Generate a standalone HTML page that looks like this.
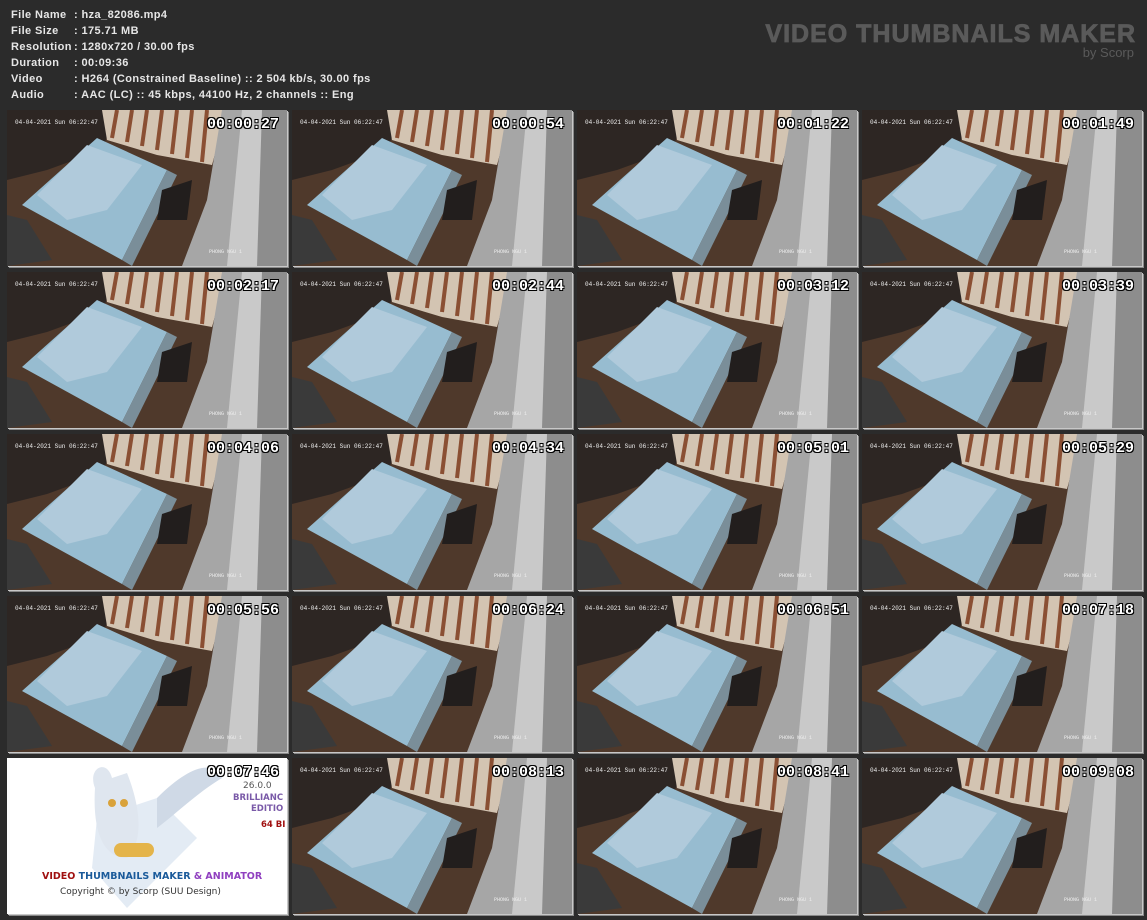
<!DOCTYPE html>
<html><head><meta charset="utf-8"><style>
body{margin:0;width:1147px;height:920px;background:#2b2b2b;overflow:hidden;position:relative;font-family:"Liberation Sans",sans-serif}
.info{position:absolute;left:11px;top:7px;color:#e6e6e6;font-size:11px;font-weight:bold;line-height:16px;letter-spacing:0.4px;white-space:nowrap}
.info div span{display:inline-block;width:63px}
.brand{position:absolute;right:11px;top:21px;color:#5a5a5a;font-family:"Liberation Sans",sans-serif;font-weight:900;font-size:25px;letter-spacing:1px;text-align:right;line-height:26px;-webkit-text-stroke:0.8px #5a5a5a}
.brand small{display:block;font-weight:normal;font-size:13px;line-height:12px;margin-right:2px;letter-spacing:0;-webkit-text-stroke:0}
.t{position:absolute;width:280px;height:156px;box-shadow:1px 1px 0 #c8c8c8,2px 2px 0 #888;overflow:hidden}
.t svg{position:absolute;left:0;top:0}
.ts{position:absolute;right:8px;top:6px;color:#fff;font-family:"Liberation Mono",monospace;font-weight:bold;font-size:15px;text-shadow:1px 1px 0 #000,-1px -1px 0 #000,1px -1px 0 #000,-1px 1px 0 #000}
.logo{background:#fff}
</style></head><body>
<svg width="0" height="0" style="position:absolute"><defs>
<g id="sc">
<rect width="280" height="156" fill="#4f392b"/>
<polygon points="0,0 110,0 95,40 40,60 0,70" fill="#2d2623"/>
<polygon points="95,0 220,0 205,55 150,45 100,30" fill="#d3c4b2"/>
<g stroke="#8a4f33" stroke-width="4"><line x1="110" y1="0" x2="105" y2="28"/><line x1="125" y1="0" x2="120" y2="32"/><line x1="140" y1="0" x2="135" y2="36"/><line x1="155" y1="0" x2="150" y2="40"/><line x1="170" y1="0" x2="165" y2="44"/><line x1="185" y1="0" x2="180" y2="48"/><line x1="200" y1="0" x2="195" y2="52"/></g>
<polygon points="15,95 90,28 160,60 115,150" fill="#97bcd0"/>
<polygon points="30,85 80,35 135,55 100,100 60,110" fill="#b0cadb"/>
<polygon points="115,150 160,60 170,65 125,156" fill="#7a8e99"/>
<polygon points="155,80 185,70 180,110 150,110" fill="#221e1d"/>
<polygon points="215,0 280,0 280,156 175,156 200,90" fill="#a6a6a6"/>
<polygon points="235,0 280,0 280,156 220,156" fill="#c9c9c9"/>
<polygon points="255,0 280,0 280,156 250,156" fill="#8d8d8d"/>
<polygon points="0,105 20,110 45,150 0,156" fill="#3a3a3a"/>
<text x="8" y="14" font-size="6" fill="#eee" font-family="Liberation Mono,monospace">04-04-2021 Sun 06:22:47</text>
<text x="202" y="143" font-size="5" fill="#eee" font-family="Liberation Mono,monospace">PHONG NGU 1</text>
</g></defs></svg>
<div class="info">
<div><span>File Name</span>: hza_82086.mp4</div>
<div><span>File Size</span>: 175.71 MB</div>
<div><span>Resolution</span>: 1280x720 / 30.00 fps</div>
<div><span>Duration</span>: 00:09:36</div>
<div><span>Video</span>: H264 (Constrained Baseline) :: 2 504 kb/s, 30.00 fps</div>
<div><span>Audio</span>: AAC (LC) :: 45 kbps, 44100 Hz, 2 channels :: Eng</div>
</div>
<div class="brand">VIDEO THUMBNAILS MAKER<small>by Scorp</small></div>

<div class="t" style="left:7px;top:110px"><svg width="280" height="156"><use href="#sc"/></svg><div class="ts">00:00:27</div></div>
<div class="t" style="left:292px;top:110px"><svg width="280" height="156"><use href="#sc"/></svg><div class="ts">00:00:54</div></div>
<div class="t" style="left:577px;top:110px"><svg width="280" height="156"><use href="#sc"/></svg><div class="ts">00:01:22</div></div>
<div class="t" style="left:862px;top:110px"><svg width="280" height="156"><use href="#sc"/></svg><div class="ts">00:01:49</div></div>

<div class="t" style="left:7px;top:272px"><svg width="280" height="156"><use href="#sc"/></svg><div class="ts">00:02:17</div></div>
<div class="t" style="left:292px;top:272px"><svg width="280" height="156"><use href="#sc"/></svg><div class="ts">00:02:44</div></div>
<div class="t" style="left:577px;top:272px"><svg width="280" height="156"><use href="#sc"/></svg><div class="ts">00:03:12</div></div>
<div class="t" style="left:862px;top:272px"><svg width="280" height="156"><use href="#sc"/></svg><div class="ts">00:03:39</div></div>

<div class="t" style="left:7px;top:434px"><svg width="280" height="156"><use href="#sc"/></svg><div class="ts">00:04:06</div></div>
<div class="t" style="left:292px;top:434px"><svg width="280" height="156"><use href="#sc"/></svg><div class="ts">00:04:34</div></div>
<div class="t" style="left:577px;top:434px"><svg width="280" height="156"><use href="#sc"/></svg><div class="ts">00:05:01</div></div>
<div class="t" style="left:862px;top:434px"><svg width="280" height="156"><use href="#sc"/></svg><div class="ts">00:05:29</div></div>

<div class="t" style="left:7px;top:596px"><svg width="280" height="156"><use href="#sc"/></svg><div class="ts">00:05:56</div></div>
<div class="t" style="left:292px;top:596px"><svg width="280" height="156"><use href="#sc"/></svg><div class="ts">00:06:24</div></div>
<div class="t" style="left:577px;top:596px"><svg width="280" height="156"><use href="#sc"/></svg><div class="ts">00:06:51</div></div>
<div class="t" style="left:862px;top:596px"><svg width="280" height="156"><use href="#sc"/></svg><div class="ts">00:07:18</div></div>

<div class="t logo" style="left:7px;top:758px">
<svg width="280" height="156">
<path d="M90,60 L150,40 L190,80 L120,150 L85,110 Z" fill="#e3ebf4"/>
<path d="M150,40 C180,10 205,0 215,20 C190,35 170,55 150,70 Z" fill="#cfd9e6"/>
<path d="M88,30 C80,10 100,0 105,20 L120,15 C130,40 140,80 120,100 C100,100 85,80 88,30 Z" fill="#dfe6ef"/>
<circle cx="105" cy="45" r="4" fill="#d9a23a"/><circle cx="117" cy="45" r="4" fill="#d9a23a"/>
<rect x="107" y="85" width="40" height="14" rx="7" fill="#e4b44a"/>
<text x="35" y="121" font-size="9.5" font-weight="bold" font-family="DejaVu Sans,sans-serif"><tspan fill="#a01010">VIDEO </tspan><tspan fill="#1a5a9a">THUMBNAILS MAKER </tspan><tspan fill="#9040c0">&amp; ANIMATOR</tspan></text>
<text x="53" y="136" font-size="9" fill="#333" font-family="DejaVu Sans,sans-serif">Copyright © by Scorp (SUU Design)</text>
<text x="236" y="30" font-size="9" fill="#555" font-family="DejaVu Sans,sans-serif">26.0.0</text>
<text x="226" y="42" font-size="8.5" font-weight="bold" fill="#7a5aa8" font-family="DejaVu Sans,sans-serif">BRILLIANC</text>
<text x="244" y="53" font-size="8.5" font-weight="bold" fill="#7a5aa8" font-family="DejaVu Sans,sans-serif">EDITIO</text>
<text x="254" y="69" font-size="8.5" font-weight="bold" fill="#a01010" font-family="DejaVu Sans,sans-serif">64 BI</text>
</svg>
<div class="ts" style="color:#fff;top:6px">00:07:46</div></div>
<div class="t" style="left:292px;top:758px"><svg width="280" height="156"><use href="#sc"/></svg><div class="ts">00:08:13</div></div>
<div class="t" style="left:577px;top:758px"><svg width="280" height="156"><use href="#sc"/></svg><div class="ts">00:08:41</div></div>
<div class="t" style="left:862px;top:758px"><svg width="280" height="156"><use href="#sc"/></svg><div class="ts">00:09:08</div></div>
</body></html>
